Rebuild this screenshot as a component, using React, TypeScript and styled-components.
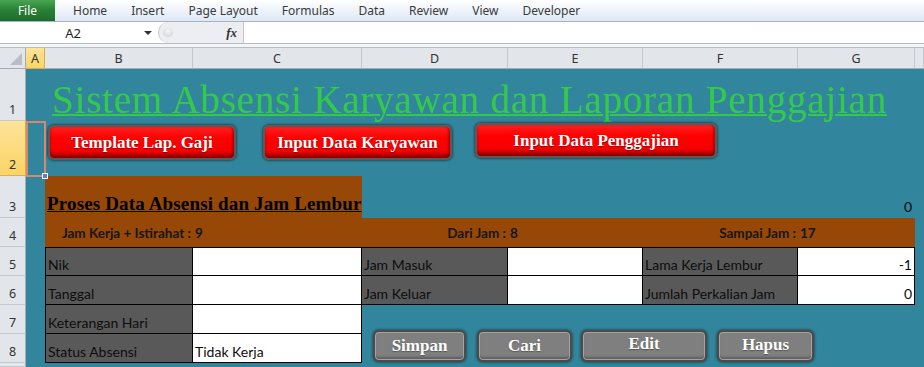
import React from 'react';
import styled, { createGlobalStyle, css } from 'styled-components';

const Global = createGlobalStyle`
  html, body { margin: 0; padding: 0; background: #fff; overflow: hidden; }
  #root { width: 924px; height: 367px; }
`;

const TEAL = '#31859c';
const BROWN = '#974706';
const GREY = '#595959';

const Window = styled.div`
  width: 924px;
  height: 367px;
  display: flex;
  flex-direction: column;
  overflow: hidden;
  font-family: "Noto Sans", "Liberation Sans", sans-serif;
`;

// ---- ribbon tabs ----
const TabBar = styled.div`
  height: 22px;
  flex: none;
  display: flex;
  background: linear-gradient(#ffffff, #dde8f5);
  border-bottom: 1px solid #a9b3c0;
  box-sizing: border-box;
`;

const FileTab = styled.div`
  width: 55px;
  display: flex;
  align-items: center;
  justify-content: center;
  background: linear-gradient(#48a552, #2a8236 45%, #1d6c2a);
  color: #fff;
  font-size: 12px;
`;

const TabList = styled.div`
  display: flex;
  align-items: center;
  gap: 24px;
  padding-left: 18px;
  font-size: 12px;
  color: #3a3a3a;
`;

// ---- formula bar ----
const FormulaBar = styled.div`
  height: 22px;
  flex: none;
  display: flex;
  background: #fff;
  border-bottom: 1px solid #b8bdc5;
  box-sizing: border-box;
`;

const NameBox = styled.div`
  width: 158px;
  display: flex;
  align-items: center;
  font-size: 13px;
  color: #1e1e1e;
`;

const NameText = styled.span`
  flex: 1;
  text-align: center;
  padding-left: 2px;
`;

const DropArrow = styled.span`
  width: 0;
  height: 0;
  margin-right: 6px;
  border-left: 4px solid transparent;
  border-right: 4px solid transparent;
  border-top: 4px solid #333;
`;

const FxZone = styled.div`
  width: 86px;
  display: flex;
  align-items: center;
  justify-content: space-between;
  padding: 0 6px 0 4px;
  box-sizing: border-box;
  background: #eceef1;
  border-left: 1px solid #c3c8cf;
  border-right: 1px solid #c3c8cf;
  border-radius: 11px 0 0 11px;
`;

const Knob = styled.span`
  width: 10px;
  height: 9px;
  border-radius: 50%;
  background: radial-gradient(circle at 50% 35%, #f6f7f8, #c9cdd3);
`;

const Fx = styled.span`
  font: italic 700 13px "Liberation Serif", serif;
  color: #333;
`;

const FormulaInput = styled.div`
  flex: 1;
`;

const Strip = styled.div`
  height: 4px;
  flex: none;
  background: #f4f5f6;
  border-bottom: 1px solid #b8bdc5;
  box-sizing: border-box;
`;

// ---- sheet grid ----
const Sheet = styled.div`
  flex: 1;
  min-height: 0;
  display: grid;
  grid-template-columns: 26px 19px 148px 169px 146px 135px 155px 117px 1fr;
  grid-template-rows: 21px 52px 55px 42px 29px 29px 29px 29px 29px 1fr;
`;

const Corner = styled.div`
  grid-column: 1;
  grid-row: 1;
  position: relative;
  background: #e2e5e9;
  border-right: 1px solid #a3abb5;
  border-bottom: 1px solid #a3abb5;
  &::after {
    content: '';
    position: absolute;
    right: 3px;
    bottom: 3px;
    border-style: solid;
    border-width: 0 0 12px 12px;
    border-color: transparent transparent #b8bec7 transparent;
  }
`;

const headBase = css<{ $active?: boolean }>`
  display: flex;
  justify-content: center;
  box-sizing: border-box;
  font-size: 12.5px;
  color: #333;
  background: ${p => (p.$active ? 'linear-gradient(#fde49a, #f9d466)' : '#e2e5e9')};
`;

const ColHead = styled.div<{ $col: number; $active?: boolean }>`
  ${headBase};
  grid-column: ${p => p.$col};
  grid-row: 1;
  align-items: center;
  border-right: 1px solid ${p => (p.$active ? '#e3aa4d' : '#c3c8cf')};
  border-bottom: 1px solid ${p => (p.$active ? '#e3aa4d' : '#a3abb5')};
`;

const RowHead = styled.div<{ $row: number; $active?: boolean }>`
  ${headBase};
  grid-column: 1;
  grid-row: ${p => p.$row};
  align-items: flex-end;
  padding-bottom: 2px;
  border-bottom: 1px solid ${p => (p.$active ? '#e3aa4d' : '#c3c8cf')};
  border-right: 1px solid ${p => (p.$active ? '#e3aa4d' : '#a3abb5')};
`;

const Canvas = styled.div`
  grid-column: 2 / -1;
  grid-row: 2 / -1;
  background: ${TEAL};
`;

const Selection = styled.div`
  grid-column: 2;
  grid-row: 3;
  position: relative;
  margin: 0 -1px -1px 0;
  border: 2px solid #d8866c;
  &::after {
    content: '';
    position: absolute;
    right: -4px;
    bottom: -4px;
    width: 4px;
    height: 4px;
    background: #4f86c6;
    border: 1px solid #fff;
  }
`;

const Title = styled.h1`
  grid-column: 3 / -1;
  grid-row: 2;
  align-self: end;
  margin: 0;
  padding: 0 0 2px 7px;
  font: 400 39px/1 "Liberation Serif", serif;
  letter-spacing: 0.8px;
  color: #35c94a;
  text-decoration: underline;
  text-decoration-thickness: 2px;
  white-space: nowrap;
`;

const ActionBar = styled.div`
  grid-column: 3 / -1;
  grid-row: 3;
  display: flex;
  align-items: flex-start;
  padding: 4px 0 0 3px;
`;

const RedButton = styled.button<{ $w: number; $gap: number; $lift?: number }>`
  width: ${p => p.$w}px;
  height: 35px;
  margin: ${p => -(p.$lift ?? 0)}px 0 0 ${p => p.$gap}px;
  padding: 0;
  border: 2px solid #5a5a5a;
  border-radius: 6px;
  background: linear-gradient(#ff1f1f, #ff0000 35%, #f70000 75%, #b40000);
  box-shadow: 0 0 2px 1px rgba(30, 30, 30, 0.55), inset 0 -3px 3px rgba(110, 0, 0, 0.55),
    inset -2px 0 2px rgba(110, 0, 0, 0.35);
  color: #fff;
  font: 700 17px "Liberation Serif", serif;
  text-shadow: 0 1px 1px rgba(90, 0, 0, 0.6);
  cursor: pointer;
`;

const SectionHead = styled.div`
  grid-column: 3 / 5;
  grid-row: 4;
  display: flex;
  align-items: flex-end;
  padding: 0 0 3px 2px;
  background: ${BROWN};
  font: 700 19px "Liberation Serif", serif;
  letter-spacing: 0.15px;
  color: #000;
  text-decoration: underline;
  white-space: nowrap;
`;

const cellBase = css<{ $col: string; $row: number; $align?: 'left' | 'right' | 'center' }>`
  grid-column: ${p => p.$col};
  grid-row: ${p => p.$row};
  display: flex;
  justify-content: ${p => (p.$align === 'right' ? 'flex-end' : p.$align === 'center' ? 'center' : 'flex-start')};
  box-sizing: border-box;
  white-space: nowrap;
  font-family: Lato, "Liberation Sans", sans-serif;
  color: #0d0d0d;
`;

const PlainCell = styled.div<{ $col: string; $row: number; $align?: 'left' | 'right' | 'center' }>`
  ${cellBase};
  align-items: flex-end;
  padding: 0 3px 3px 2px;
  font-size: 14px;
`;

const BandCell = styled.div<{ $col: string; $row: number; $align?: 'left' | 'right' | 'center' }>`
  ${cellBase};
  align-items: center;
  padding: 0 2px;
  background: ${BROWN};
  font-size: 13.5px;
  font-weight: 700;
  color: #161616;
`;

const TableCell = styled.div<{
  $col: string;
  $row: number;
  $align?: 'left' | 'right' | 'center';
  $label?: boolean;
  $first?: boolean;
  $top?: boolean;
}>`
  ${cellBase};
  align-items: flex-end;
  padding: 0 2px 2px 2px;
  font-size: 14px;
  background: ${p => (p.$label ? GREY : '#fff')};
  border-right: 1px solid #000;
  border-bottom: 1px solid #000;
  border-left: ${p => (p.$first ? '1px solid #000' : 'none')};
  border-top: ${p => (p.$top ? '1px solid #000' : 'none')};
`;

const CommandBar = styled.div`
  grid-column: 5 / -1;
  grid-row: 8 / -1;
  display: flex;
  align-items: flex-start;
  padding: 25px 0 0 11px;
`;

const GreyButton = styled.button<{ $w: number; $gap: number; $raise?: number }>`
  width: ${p => p.$w}px;
  height: 32px;
  margin-left: ${p => p.$gap}px;
  padding: 0 0 ${p => p.$raise ?? 0}px;
  border: 2px solid #4b4b4b;
  border-radius: 6px;
  background: #7f7f7f;
  box-shadow: 0 0 2px 1px rgba(30, 30, 30, 0.45), inset 0 0 0 1px #a3a3a3, inset 0 -3px 2px rgba(0, 0, 0, 0.25);
  color: #fff;
  font: 700 17px "Liberation Serif", serif;
  text-shadow: 0 1px 1px rgba(0, 0, 0, 0.35);
  cursor: pointer;
`;

const tabs = ['Home', 'Insert', 'Page Layout', 'Formulas', 'Data', 'Review', 'View', 'Developer'];
const columns = ['A', 'B', 'C', 'D', 'E', 'F', 'G', ''];

const rows: { label: string; value?: string; extra?: [string, string, string, string] }[] = [
  { label: 'Nik', extra: ['Jam Masuk', '', 'Lama Kerja Lembur', '-1'] },
  { label: 'Tanggal', extra: ['Jam Keluar', '', 'Jumlah Perkalian Jam', '0'] },
  { label: 'Keterangan Hari' },
  { label: 'Status Absensi', value: 'Tidak Kerja' },
];

export default function App() {
  return (
    <Window>
      <Global />
      <TabBar>
        <FileTab>File</FileTab>
        <TabList>
          {tabs.map(t => (
            <span key={t}>{t}</span>
          ))}
        </TabList>
      </TabBar>

      <FormulaBar>
        <NameBox>
          <NameText>A2</NameText>
          <DropArrow />
        </NameBox>
        <FxZone>
          <Knob />
          <Fx>fx</Fx>
        </FxZone>
        <FormulaInput />
      </FormulaBar>
      <Strip />

      <Sheet>
        <Corner />
        {columns.map((c, i) => (
          <ColHead key={i} $col={i + 2} $active={c === 'A'}>
            {c}
          </ColHead>
        ))}
        {[1, 2, 3, 4, 5, 6, 7, 8].map(r => (
          <RowHead key={r} $row={r + 1} $active={r === 2}>
            {r}
          </RowHead>
        ))}
        <RowHead $row={10} />

        <Canvas />
        <Selection />

        <Title>Sistem Absensi Karyawan dan Laporan Penggajian</Title>

        <ActionBar>
          <RedButton $w={188} $gap={0}>Template Lap. Gaji</RedButton>
          <RedButton $w={189} $gap={27}>Input Data Karyawan</RedButton>
          <RedButton $w={242} $gap={23} $lift={2}>Input Data Penggajian</RedButton>
        </ActionBar>

        <SectionHead>Proses Data Absensi dan Jam Lembur</SectionHead>
        <PlainCell $col="8" $row={4} $align="right">0</PlainCell>

        <BandCell $col="3" $row={5} $align="right">Jam Kerja + Istirahat :</BandCell>
        <BandCell $col="4" $row={5}>9</BandCell>
        <BandCell $col="5" $row={5} $align="right">Dari Jam :</BandCell>
        <BandCell $col="6" $row={5}>8</BandCell>
        <BandCell $col="7" $row={5} $align="right">Sampai Jam :</BandCell>
        <BandCell $col="8" $row={5}>17</BandCell>

        {rows.map((r, i) => {
          const row = i + 6;
          const top = i === 0;
          return (
            <React.Fragment key={r.label}>
              <TableCell $col="3" $row={row} $label $first $top={top}>{r.label}</TableCell>
              <TableCell $col="4" $row={row} $top={top}>{r.value}</TableCell>
              {r.extra && (
                <>
                  <TableCell $col="5" $row={row} $label $top={top}>{r.extra[0]}</TableCell>
                  <TableCell $col="6" $row={row} $top={top}>{r.extra[1]}</TableCell>
                  <TableCell $col="7" $row={row} $label $top={top}>{r.extra[2]}</TableCell>
                  <TableCell $col="8" $row={row} $align="right" $top={top}>{r.extra[3]}</TableCell>
                </>
              )}
            </React.Fragment>
          );
        })}

        <CommandBar>
          <GreyButton $w={93} $gap={0}>Simpan</GreyButton>
          <GreyButton $w={95} $gap={11}>Cari</GreyButton>
          <GreyButton $w={126} $gap={9} $raise={5}>Edit</GreyButton>
          <GreyButton $w={97} $gap={10} $raise={3}>Hapus</GreyButton>
        </CommandBar>
      </Sheet>
    </Window>
  );
}
